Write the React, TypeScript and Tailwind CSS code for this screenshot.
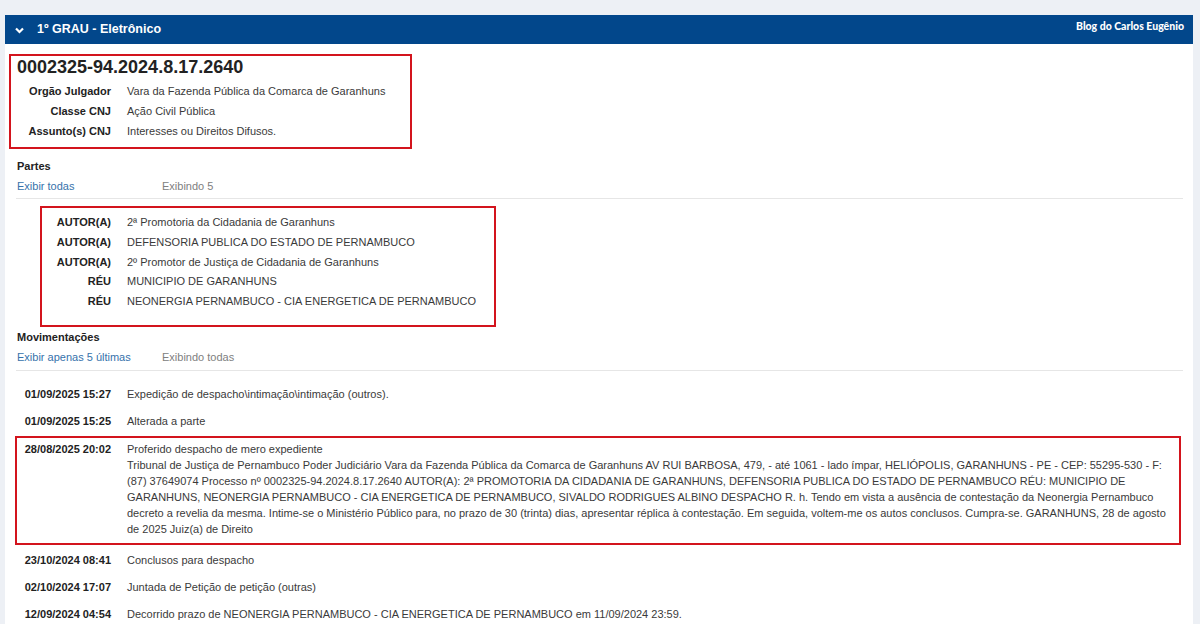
import React from 'react'

const partes = [
  { tipo: 'AUTOR(A)', nome: '2ª Promotoria da Cidadania de Garanhuns' },
  { tipo: 'AUTOR(A)', nome: 'DEFENSORIA PUBLICA DO ESTADO DE PERNAMBUCO' },
  { tipo: 'AUTOR(A)', nome: '2º Promotor de Justiça de Cidadania de Garanhuns' },
  { tipo: 'RÉU', nome: 'MUNICIPIO DE GARANHUNS' },
  { tipo: 'RÉU', nome: 'NEONERGIA PERNAMBUCO - CIA ENERGETICA DE PERNAMBUCO' },
]

const despacho =
  'Tribunal de Justiça de Pernambuco Poder Judiciário Vara da Fazenda Pública da Comarca de Garanhuns AV RUI BARBOSA, 479, - até 1061 - lado ímpar, HELIÓPOLIS, GARANHUNS - PE - CEP: 55295-530 - F: (87) 37649074 Processo nº 0002325-94.2024.8.17.2640 AUTOR(A): 2ª PROMOTORIA DA CIDADANIA DE GARANHUNS, DEFENSORIA PUBLICA DO ESTADO DE PERNAMBUCO RÉU: MUNICIPIO DE GARANHUNS, NEONERGIA PERNAMBUCO - CIA ENERGETICA DE PERNAMBUCO, SIVALDO RODRIGUES ALBINO DESPACHO R. h. Tendo em vista a ausência de contestação da Neonergia Pernambuco decreto a revelia da mesma. Intime-se o Ministério Público para, no prazo de 30 (trinta) dias, apresentar réplica à contestação. Em seguida, voltem-me os autos conclusos. Cumpra-se. GARANHUNS, 28 de agosto de 2025 Juiz(a) de Direito'

function Movimento({ data, children }: { data: string; children: React.ReactNode }) {
  return (
    <div className="grid grid-cols-[94px_1050px] gap-x-[16px] py-[5.5px] leading-[16px]">
      <div className="text-right font-bold text-[#222]">{data}</div>
      <div>{children}</div>
    </div>
  )
}

export default function App() {
  return (
    <div className="h-screen overflow-hidden bg-[#edf0f5] pt-[15px] pl-[5px] pr-[7px] font-['Liberation_Sans',Arial,sans-serif] text-[11px] text-[#3a3a3a]">
      <div className="bg-white min-h-[609px]">
        {/* cabeçalho azul */}
        <div className="h-[29px] bg-[#02478b] flex items-center pl-[10px] pr-[9px] text-white">
          <svg width="9" height="7" viewBox="0 0 9 7" className="mt-[1px]">
            <polyline points="1,1.5 4.5,5 8,1.5" fill="none" stroke="white" strokeWidth="2.2" />
          </svg>
          <span className="ml-[13px] font-bold text-[12.5px]">1º GRAU - Eletrônico</span>
          <span className="ml-auto self-start mt-[6px] leading-[11px] font-['Lato',sans-serif] font-black text-[10.5px]">
            Blog do Carlos Eugênio
          </span>
        </div>

        <div className="pl-[12px] pr-[10px] pt-[10px]">
          {/* dados do processo */}
          <div className="-ml-[8px] w-[403px] border-2 border-[#d3141d] pl-[6px] pb-[6px]">
            <div className="text-[18px] leading-[22px] font-bold text-[#222]">0002325-94.2024.8.17.2640</div>
            <div className="mt-[3px] grid grid-cols-[94px_1fr] gap-x-[16px] leading-[20px]">
              <div className="text-right font-bold text-[#222]">Orgão Julgador</div>
              <div>Vara da Fazenda Pública da Comarca de Garanhuns</div>
              <div className="text-right font-bold text-[#222]">Classe CNJ</div>
              <div>Ação Civil Pública</div>
              <div className="text-right font-bold text-[#222]">Assunto(s) CNJ</div>
              <div>Interesses ou Direitos Difusos.</div>
            </div>
          </div>

          {/* partes */}
          <div className="mt-[7px] leading-[20px] font-bold text-[#222]">Partes</div>
          <div className="flex leading-[20px]">
            <a className="w-[145px] text-[#3672ab]">Exibir todas</a>
            <span className="text-[#808080]">Exibindo 5</span>
          </div>
          <div className="-ml-[1px] mt-[2px] border-t border-[#e6e6e6]" />
          <div className="ml-[23px] mt-[7px] w-[456px] border-2 border-[#d3141d] pt-[5px] pb-[13px]">
            <div className="grid grid-cols-[69px_1fr] gap-x-[16px] leading-[19.75px]">
              {partes.map((p, i) => (
                <React.Fragment key={i}>
                  <div className="text-right font-bold text-[#222]">{p.tipo}</div>
                  <div>{p.nome}</div>
                </React.Fragment>
              ))}
            </div>
          </div>

          {/* movimentações */}
          <div className="leading-[20px] font-bold text-[#222]">Movimentações</div>
          <div className="flex leading-[20px]">
            <a className="w-[145px] text-[#3672ab]">Exibir apenas 5 últimas</a>
            <span className="text-[#808080]">Exibindo todas</span>
          </div>
          <div className="-ml-[1px] mt-[3px] border-t border-[#e6e6e6]" />
          <div className="pt-[9.5px]">
            <Movimento data="01/09/2025 15:27">Expedição de despacho\intimação\intimação (outros).</Movimento>
            <Movimento data="01/09/2025 15:25">Alterada a parte</Movimento>
            <div className="-ml-[2px] my-[1.5px] w-[1166px] border-2 border-[#d3141d] pt-[3px] pb-[6px]">
              <div className="grid grid-cols-[94px_1050px] gap-x-[16px] leading-[16px]">
                <div className="text-right font-bold text-[#222]">28/08/2025 20:02</div>
                <div>
                  <div>Proferido despacho de mero expediente</div>
                  <div>{despacho}</div>
                </div>
              </div>
            </div>
            <Movimento data="23/10/2024 08:41">Conclusos para despacho</Movimento>
            <Movimento data="02/10/2024 17:07">Juntada de Petição de petição (outras)</Movimento>
            <Movimento data="12/09/2024 04:54">
              Decorrido prazo de NEONERGIA PERNAMBUCO - CIA ENERGETICA DE PERNAMBUCO em 11/09/2024 23:59.
            </Movimento>
          </div>
        </div>
      </div>
    </div>
  )
}
